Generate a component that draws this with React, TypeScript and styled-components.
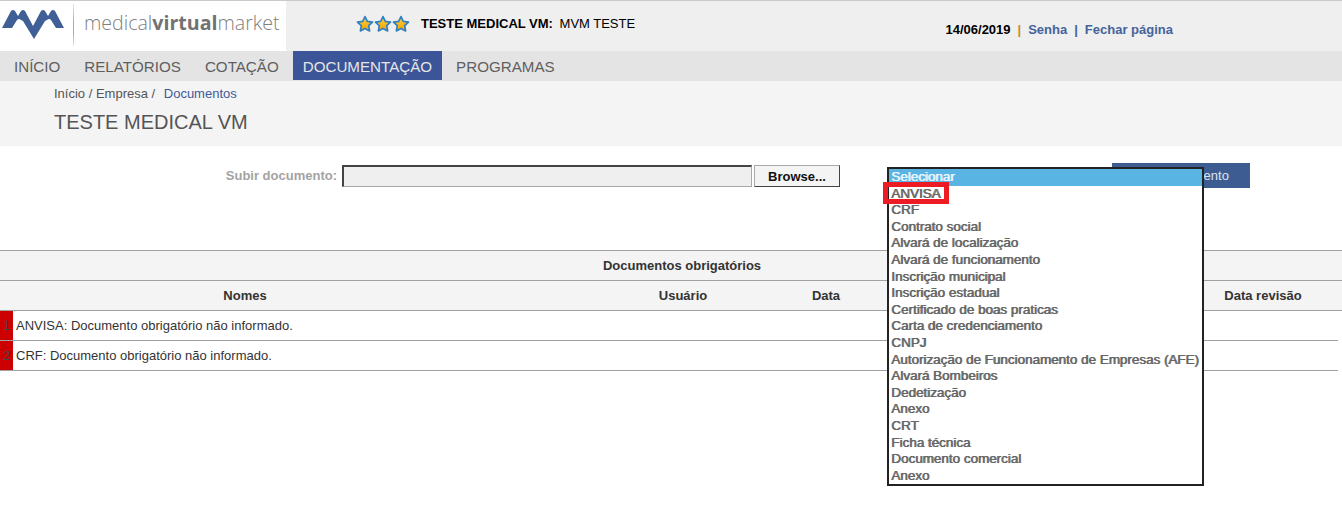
import React from 'react';
import styled, { createGlobalStyle } from 'styled-components';

const GlobalStyle = createGlobalStyle`
  html, body {
    margin: 0;
    padding: 0;
    background: #fff;
    font-family: "Liberation Sans", Arial, sans-serif;
  }
`;

const Page = styled.div`
  position: relative;
  width: 1342px;
  height: 515px;
  overflow: hidden;
`;

// header
const Header = styled.header`
  height: 50px;
  border-top: 1px solid #c9c9c9;
  background: #efefef;
  display: flex;
  align-items: center;
`;

const LogoBox = styled.div`
  width: 286px;
  height: 50px;
  background: #fff;
  display: flex;
  align-items: center;
  flex-shrink: 0;
`;

const LogoMark = styled.svg`
  width: 65px;
  height: 40px;
  margin-top: -2px;
  flex-shrink: 0;
`;

const LogoDivider = styled.div`
  width: 1px;
  height: 42px;
  margin: -2px 10px 0 8px;
  background: linear-gradient(#e6e6e6, #a8a8a8 45%, #a8a8a8 70%, #e6e6e6);
`;

const LogoText = styled.div`
  font-family: "Open Sans", sans-serif;
  font-size: 19.6px;
  font-weight: 300;
  color: #808080;
  margin-top: -8px;
  white-space: nowrap;
  b {
    font-weight: 700;
    color: #727272;
  }
`;

const Stars = styled.div`
  display: flex;
  margin: -4px 0 0 70px;
`;

const Company = styled.div`
  margin: -5px 0 0 11px;
  font-size: 13px;
  color: #000;
  b {
    margin-right: 3px;
  }
`;

const UserLinks = styled.div`
  margin-left: auto;
  margin-right: 169px;
  margin-top: 7px;
  font-size: 13px;
  font-weight: bold;
  color: #000;
  display: flex;
  gap: 7px;
`;

const TopLink = styled.a`
  color: #44639a;
`;

const Sep = styled.span<{ $orange?: boolean }>`
  color: ${(props) => (props.$orange ? '#c98a2e' : '#44639a')};
`;

// menu
const Nav = styled.nav`
  height: 30px;
  background: #e4e4e4;
  display: flex;
  padding-left: 4px;
`;

const NavItem = styled.a<{ $active?: boolean }>`
  height: 29px;
  padding: 0 10px;
  margin-right: 4px;
  font-size: 15.17px;
  line-height: 31px;
  color: ${(props) => (props.$active ? '#e6e6e6' : '#5f5f5f')};
  background: ${(props) => (props.$active ? '#3b5598' : 'transparent')};
`;

const SubHeader = styled.div`
  height: 65px;
  background: #f4f4f4;
  padding-left: 54px;
  box-sizing: border-box;
`;

const Crumbs = styled.div`
  padding-top: 6px;
  font-size: 13px;
  line-height: 14px;
  color: #555;
  span {
    color: #3f5a99;
    margin-left: 5px;
  }
`;

const PageTitle = styled.h1`
  margin: 9px 0 0;
  font-size: 20px;
  line-height: 24px;
  font-weight: normal;
  color: #555;
`;

// upload
const UploadRow = styled.div`
  height: 104px;
  padding-top: 17px;
  box-sizing: border-box;
  display: flex;
  align-items: flex-start;
`;

const UploadLabel = styled.label`
  width: 337px;
  padding-top: 5px;
  text-align: right;
  font-size: 13px;
  font-weight: bold;
  color: #a3a3a3;
`;

const FileInput = styled.div`
  width: 410px;
  height: 22px;
  margin: 2px 0 0 5px;
  box-sizing: border-box;
  background: #efefef;
  border: 1px solid #a9a9a9;
  border-top: 2px solid #444;
  border-left: 2px solid #444;
`;

const BrowseButton = styled.button`
  width: 86px;
  height: 22px;
  margin: 2px 0 0 2px;
  padding: 0;
  box-sizing: border-box;
  background: #f4f4f4;
  border: 1px solid #a9a9a9;
  border-right: 1px solid #444;
  border-bottom: 1px solid #444;
  font-family: inherit;
  font-size: 13px;
  font-weight: bold;
  color: #111;
`;

const SendButton = styled.button`
  width: 138px;
  height: 25px;
  margin-left: 272px;
  padding: 0 9px 0 0;
  border: none;
  background: #3d5c92;
  font-family: inherit;
  font-size: 13px;
  color: #dfe4ee;
`;

// table
const DocTable = styled.section`
  border-top: 1px solid #a0a0a0;
`;

const SectionTitle = styled.div`
  height: 29px;
  line-height: 30px;
  background: #f4f4f4;
  border-bottom: 1px solid #a0a0a0;
  text-align: center;
  font-size: 13px;
  font-weight: bold;
  color: #333;
  padding-left: 22px;
`;

const COLUMNS = '490px 120px 146px 140px 292px 150px';

const HeadRow = styled.div`
  height: 29px;
  background: #f4f4f4;
  border-bottom: 1px solid #a0a0a0;
  display: grid;
  grid-template-columns: ${COLUMNS};
`;

const HeadCell = styled.div<{ $col: number }>`
  grid-column: ${(props) => props.$col};
  line-height: 30px;
  text-align: center;
  font-size: 13px;
  font-weight: bold;
  color: #333;
`;

const BodyRow = styled.div`
  width: 1338px;
  height: 29px;
  border-bottom: 1px solid #a0a0a0;
  display: flex;
`;

const RowNumber = styled.div`
  width: 13px;
  background: #cc0000;
  text-align: center;
  font-size: 13px;
  line-height: 30px;
  color: #444;
`;

const RowText = styled.div`
  padding-left: 3px;
  font-size: 13px;
  line-height: 30px;
  color: #333;
`;

// lista aberta do select, por cima da pagina
const Dropdown = styled.ul`
  position: absolute;
  left: 887px;
  top: 167px;
  width: 317px;
  height: 319px;
  margin: 0;
  padding: 0;
  box-sizing: border-box;
  border: 2px solid #222;
  background: #fff;
  list-style: none;
  font-size: 13.45px;
  line-height: 16.6px;
  color: #666;
  text-shadow: 0.8px 0 0 currentColor;
`;

const Option = styled.li<{ $selected?: boolean }>`
  padding-left: 2px;
  height: 16.6px;
  white-space: nowrap;
  background: ${(props) => (props.$selected ? '#5ab4e3' : 'transparent')};
  color: ${(props) => (props.$selected ? '#eaf5fb' : 'inherit')};
`;

const Highlight = styled.div`
  position: absolute;
  left: 883px;
  top: 182px;
  width: 66px;
  height: 22px;
  box-sizing: border-box;
  border: 5px solid #ed1c24;
`;

const options = [
  'Selecionar',
  'ANVISA',
  'CRF',
  'Contrato social',
  'Alvará de localização',
  'Alvará de funcionamento',
  'Inscrição municipal',
  'Inscrição estadual',
  'Certificado de boas praticas',
  'Carta de credenciamento',
  'CNPJ',
  'Autorização de Funcionamento de Empresas (AFE)',
  'Alvará Bombeiros',
  'Dedetização',
  'Anexo',
  'CRT',
  'Ficha técnica',
  'Documento comercial',
  'Anexo',
];

const rows = [
  'ANVISA: Documento obrigatório não informado.',
  'CRF: Documento obrigatório não informado.',
];

const Star = () => (
  <svg width="18" height="18" viewBox="0 0 18 18">
    <defs>
      <linearGradient id="starFill" x1="0" y1="0" x2="0" y2="1">
        <stop offset="0" stopColor="#ffd23a" />
        <stop offset="1" stopColor="#f7a000" />
      </linearGradient>
    </defs>
    <path
      d="M9 1.6l2.3 4.8 5.2.7-3.8 3.6.9 5.2L9 13.4l-4.6 2.5.9-5.2L1.5 7.1l5.2-.7z"
      fill="url(#starFill)"
      stroke="#2f80c2"
      strokeWidth="1.7"
      strokeLinejoin="round"
    />
  </svg>
);

export default function App() {
  return (
    <>
      <GlobalStyle />
      <Page>
        <Header>
          <LogoBox>
            <LogoMark viewBox="0 5 65 40">
              <path
                d="M2 28L11 11q2-2 4 0l3 5 3-5q2-2 4 0l8 15 8-15q2-2 4 0l3 5 3-5q2-2 4 0l9 17h-8l-5-8q-2-2-4 0l-2 1-11 18-11-18-2-1q-2-2-4 0l-5 8z"
                fill="#3f5f96"
              />
            </LogoMark>
            <LogoDivider />
            <LogoText>
              medical<b>virtual</b>market
            </LogoText>
          </LogoBox>
          <Stars>
            <Star />
            <Star />
            <Star />
          </Stars>
          <Company>
            <b>TESTE MEDICAL VM:</b> MVM TESTE
          </Company>
          <UserLinks>
            <span>14/06/2019</span>
            <Sep $orange>|</Sep>
            <TopLink>Senha</TopLink>
            <Sep>|</Sep>
            <TopLink>Fechar página</TopLink>
          </UserLinks>
        </Header>
        <Nav>
          <NavItem>INÍCIO</NavItem>
          <NavItem>RELATÓRIOS</NavItem>
          <NavItem>COTAÇÃO</NavItem>
          <NavItem $active>DOCUMENTAÇÃO</NavItem>
          <NavItem>PROGRAMAS</NavItem>
        </Nav>
        <SubHeader>
          <Crumbs>
            Início / Empresa / <span>Documentos</span>
          </Crumbs>
          <PageTitle>TESTE MEDICAL VM</PageTitle>
        </SubHeader>
        <UploadRow>
          <UploadLabel>Subir documento:</UploadLabel>
          <FileInput />
          <BrowseButton>Browse...</BrowseButton>
          <SendButton>Enviar documento</SendButton>
        </UploadRow>
        <DocTable>
          <SectionTitle>Documentos obrigatórios</SectionTitle>
          <HeadRow>
            <HeadCell $col={1}>Nomes</HeadCell>
            <HeadCell $col={3}>Usuário</HeadCell>
            <HeadCell $col={4}>Data</HeadCell>
            <HeadCell $col={6}>Data revisão</HeadCell>
          </HeadRow>
          {rows.map((text, i) => (
            <BodyRow key={text}>
              <RowNumber>{i + 1}</RowNumber>
              <RowText>{text}</RowText>
            </BodyRow>
          ))}
        </DocTable>
        <Dropdown>
          {options.map((name, i) => (
            <Option key={i} $selected={i === 0}>
              {name}
            </Option>
          ))}
        </Dropdown>
        <Highlight />
      </Page>
    </>
  );
}
